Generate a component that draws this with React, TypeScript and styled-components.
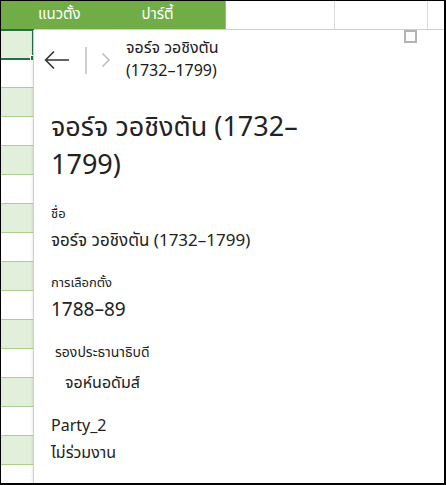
import React from "react";
import styled, { createGlobalStyle } from "styled-components";

const Global = createGlobalStyle`
  html, body { margin: 0; padding: 0; background: #fff; }
  body { font-family: "Leelawadee UI", "Segoe UI", "Noto Sans Thai", "Noto Sans", "DejaVu Sans", sans-serif; }
  * { box-sizing: border-box; }
`;

const Frame = styled.div`
  width: 446px;
  height: 485px;
  border-top: 1px solid #000;
  border-left: 1px solid #000;
  border-right: 2px solid #000;
  border-bottom: 2px solid #000;
  display: flex;
  flex-direction: column;
  overflow: hidden;
  background: #fff;
`;

const HeaderBar = styled.div`
  height: 29px;
  flex: none;
  display: flex;
  border-bottom: 1px solid #d4d4d4;
`;

const GreenHeader = styled.div`
  width: 225px;
  background: #70ad47;
  border-right: 1px solid #8fc56a;
  display: flex;
  align-items: center;
  color: #fff;
  font-size: 15px;
`;

const HeadLabel = styled.span<{ $left: number }>`
  margin-left: ${(p) => p.$left}px;
  line-height: 20px;
`;

const BlankHeadCell = styled.div<{ $w: number }>`
  width: ${(p) => p.$w}px;
  border-right: 1px solid #d9d9d9;
  flex: none;
`;

const Body = styled.div`
  flex: 1;
  display: flex;
  min-height: 0;
  position: relative;
`;

const RowColumn = styled.div`
  width: 33px;
  flex: none;
  display: flex;
  flex-direction: column;
  position: relative;
`;

const Row = styled.div<{ $green: boolean }>`
  height: 29px;
  flex: none;
  background: ${(p) => (p.$green ? "#e2efda" : "#fff")};
  border-bottom: 1px solid #a9d08e;
`;

const SelectedCell = styled.div`
  position: absolute;
  left: -1px;
  top: -1px;
  width: 34px;
  height: 31px;
  border: 2px solid #217346;
  border-left: none;
`;

const Handle = styled.div`
  position: absolute;
  left: 29px;
  top: 25px;
  width: 6px;
  height: 6px;
  background: #217346;
  border: 1px solid #fff;
`;

const Card = styled.div`
  flex: 1;
  background: #fff;
  box-shadow: -1px 0 0 #cfcfcf, -2px 0 2px rgba(0, 0, 0, 0.08);
  position: relative;
  display: flex;
  flex-direction: column;
  color: #222;
`;

const Checkbox = styled.div`
  position: absolute;
  right: 27px;
  top: 0px;
  width: 13px;
  height: 13px;
  border: 2px solid #b3b3b3;
  background: #fcfcfc;
`;

const NavRow = styled.div`
  display: flex;
  align-items: center;
  padding: 8px 0 0 10px;
  height: 52px;
`;

const IconButton = styled.div`
  width: 26px;
  height: 26px;
  display: flex;
  align-items: center;
  justify-content: center;
`;

const Divider = styled.div`
  width: 2px;
  height: 27px;
  background: #cfcfcf;
  margin: 0 14px 0 15px;
`;

const NavTitle = styled.div`
  margin-left: 15px;
  font-size: 16px;
  line-height: 23px;
  color: #1a1a1a;
`;

const Content = styled.div`
  padding: 27px 0 0 17px;
  display: flex;
  flex-direction: column;
`;

const Heading = styled.h1`
  margin: 0;
  width: 250px;
  font-size: 27px;
  font-weight: 400;
  line-height: 38px;
  color: #222;
`;

const Field = styled.div<{ $indent?: number; $top: number }>`
  margin-top: ${(p) => p.$top}px;
  padding-left: ${(p) => p.$indent ?? 0}px;
`;

const Label = styled.div<{ $size?: number }>`
  font-size: ${(p) => p.$size ?? 13}px;
  line-height: 20px;
  color: #222;
`;

const Value = styled.div<{ $size?: number; $indent?: number; $gap?: number }>`
  font-size: ${(p) => p.$size ?? 16}px;
  line-height: 24px;
  color: #222;
  margin-top: ${(p) => p.$gap ?? 4}px;
  padding-left: ${(p) => p.$indent ?? 0}px;
`;

const greens = [false, true, false, true, false, true, false, true, false, true, false, true, false, true, false];

export default function App() {
  return (
    <Frame>
      <Global />
      <HeaderBar>
        <GreenHeader>
          <HeadLabel $left={37}>แนวตั้ง</HeadLabel>
          <HeadLabel $left={61}>ปาร์ตี้</HeadLabel>
        </GreenHeader>
        <BlankHeadCell $w={109} />
        <BlankHeadCell $w={93} />
      </HeaderBar>
      <Body>
        <RowColumn>
          <Row $green={true} />
          {greens.map((g, i) => (
            <Row key={i} $green={g} />
          ))}
          <SelectedCell />
          <Handle />
        </RowColumn>
        <Card>
          <Checkbox />
          <NavRow>
            <IconButton>
              <svg width="26" height="20" viewBox="0 0 26 20" fill="none" stroke="#333" strokeWidth="1.6">
                <path d="M25 10H2M10 1.5L1.6 10L10 18.5" />
              </svg>
            </IconButton>
            <Divider />
            <svg width="10" height="16" viewBox="0 0 10 16" fill="none" stroke="#bdbdbd" strokeWidth="1.5">
              <path d="M1.5 1.5L8 8L1.5 14.5" />
            </svg>
            <NavTitle>
              จอร์จ วอชิงตัน
              <br />
              (1732–1799)
            </NavTitle>
          </NavRow>
          <Content>
            <Heading>จอร์จ วอชิงตัน (1732–1799)</Heading>
            <Field $top={19}>
              <Label>ชื่อ</Label>
              <Value $size={17} $gap={5}>จอร์จ วอชิงตัน (1732–1799)</Value>
            </Field>
            <Field $top={20}>
              <Label>การเลือกตั้ง</Label>
              <Value $size={19} $gap={6}>1788–89</Value>
            </Field>
            <Field $top={20} $indent={4}>
              <Label $size={14}>รองประธานาธิบดี</Label>
              <Value $size={16} $indent={10} $gap={8}>จอห์นอดัมส์</Value>
            </Field>
            <Field $top={21}>
              <Label $size={16}>Party_2</Label>
              <Value $size={16} $gap={5}>ไม่ร่วมงาน</Value>
            </Field>
          </Content>
        </Card>
      </Body>
    </Frame>
  );
}
